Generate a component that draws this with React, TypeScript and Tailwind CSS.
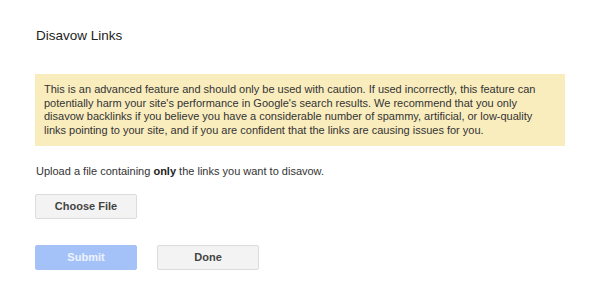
const App = () => {
  return (
    <div className="w-[600px] h-[295px] bg-white font-['Liberation_Sans',Arial,sans-serif] text-[#222]">
      <div className="pt-[28px] pl-[36px] pr-[35px]">
        <h1 className="text-[13.5px] leading-[16px] text-[#222]">Disavow Links</h1>

        {/* Warning */}
        <div className="mt-[30px] -ml-px bg-[#f9edbe] px-[9px] py-[9px] text-[11px] leading-[13.5px] text-[#333] whitespace-nowrap">
          This is an advanced feature and should only be used with caution. If used incorrectly, this feature can
          <br />
          potentially harm your site's performance in Google's search results. We recommend that you only
          <br />
          disavow backlinks if you believe you have a considerable number of spammy, artificial, or low-quality
          <br />
          links pointing to your site, and if you are confident that the links are causing issues for you.
        </div>

        <p className="mt-[18px] text-[11px] leading-[14px] text-[#333]">
          Upload a file containing <b className="text-[#222]">only</b> the links you want to disavow.
        </p>

        <button className="mt-[16px] -ml-px block w-[102px] h-[25px] rounded-[2px] border border-[#dcdcdc] bg-[#f3f3f3] text-[11px] font-bold text-[#444]">
          Choose File
        </button>

        <div className="mt-[26px] -ml-px flex gap-[20px]">
          <button className="w-[102px] h-[25px] rounded-[2px] border border-[#a4c2f8] bg-[#a4c2f8] text-[11px] font-bold text-white/80">
            Submit
          </button>
          <button className="w-[102px] h-[25px] rounded-[2px] border border-[#dcdcdc] bg-[#f3f3f3] text-[11px] font-bold text-[#444]">
            Done
          </button>
        </div>
      </div>
    </div>
  );
};

export default App;
